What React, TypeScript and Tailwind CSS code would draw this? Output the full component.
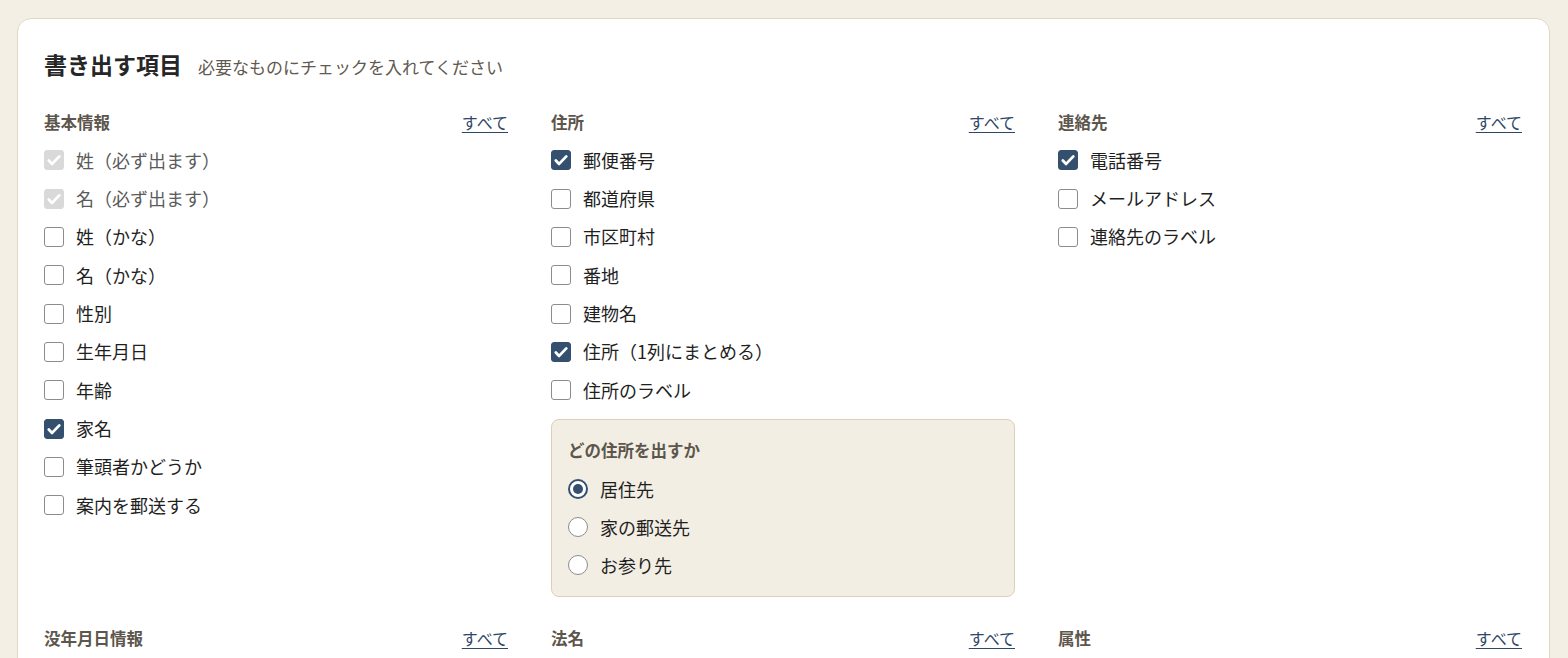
// Export options — which fields to write out.

import { useState } from "react";

type Item = { label: string; checked?: boolean; locked?: boolean };
type Section = { title: string; items: Item[]; addressBox?: boolean };

const sections: Section[] = [
  {
    title: "基本情報",
    items: [
      { label: "姓（必ず出ます）", checked: true, locked: true },
      { label: "名（必ず出ます）", checked: true, locked: true },
      { label: "姓（かな）" },
      { label: "名（かな）" },
      { label: "性別" },
      { label: "生年月日" },
      { label: "年齢" },
      { label: "家名", checked: true },
      { label: "筆頭者かどうか" },
      { label: "案内を郵送する" },
    ],
  },
  {
    title: "住所",
    addressBox: true,
    items: [
      { label: "郵便番号", checked: true },
      { label: "都道府県" },
      { label: "市区町村" },
      { label: "番地" },
      { label: "建物名" },
      { label: "住所（1列にまとめる）", checked: true },
      { label: "住所のラベル" },
    ],
  },
  {
    title: "連絡先",
    items: [{ label: "電話番号", checked: true }, { label: "メールアドレス" }, { label: "連絡先のラベル" }],
  },
  { title: "没年月日情報", items: [] },
  { title: "法名", items: [] },
  { title: "属性", items: [] },
];

const addressKinds = ["居住先", "家の郵送先", "お参り先"];

const font = "font-['Noto_Sans_CJK_JP','Noto_Sans',sans-serif]";

export default function App() {
  return (
    <div className={`min-h-screen bg-[#f4efe5] pl-[17px] pr-[18px] pt-[18px] ${font}`}>
      <div className="rounded-[14px] border border-[#e2d7c3] bg-white pl-[26px] pr-[27px] pt-[29px] pb-10">
        <div className="flex items-baseline gap-4">
          <h2 className="text-[23px] font-bold leading-8 text-[#262626]">書き出す項目</h2>
          <span className="text-[17px] text-[#5f5950]">必要なものにチェックを入れてください</span>
        </div>
        <div className="mt-[30px] grid grid-cols-3 gap-x-[43px] gap-y-[29px]">
          {sections.map((s) => (
            <SectionBlock key={s.title} section={s} />
          ))}
        </div>
      </div>
    </div>
  );
}

function SectionBlock({ section }: { section: Section }) {
  const [checked, setChecked] = useState(section.items.map((i) => !!i.checked));
  return (
    <div>
      <div className="mb-[7px] flex h-6 items-center justify-between">
        <span className="text-[16.5px] font-bold text-[#5d564c]">{section.title}</span>
        <button
          type="button"
          onClick={() => setChecked(section.items.map(() => true))}
          className="text-[16px] text-[#2e4766] underline underline-offset-[3px]"
        >
          すべて
        </button>
      </div>
      {section.items.map((item, i) => (
        <label key={item.label} className="flex h-[38.35px] items-center gap-3">
          <Checkbox
            checked={checked[i]}
            locked={item.locked}
            onToggle={() => !item.locked && setChecked((c) => c.map((v, j) => (j === i ? !v : v)))}
          />
          <span className={`text-[18px] ${item.locked ? "text-[#5a5a5a]" : "text-[#1f1f1f]"}`}>{item.label}</span>
        </label>
      ))}
      {section.addressBox && <AddressBox />}
    </div>
  );
}

function Checkbox({ checked, locked, onToggle }: { checked: boolean; locked?: boolean; onToggle: () => void }) {
  const cls = locked
    ? "bg-[#d9d9d9] border-[#d9d9d9]"
    : checked
      ? "bg-[#34506e] border-[#34506e]"
      : "bg-white border-[#8c8c8c]";
  return (
    <span
      role="checkbox"
      aria-checked={checked}
      onClick={onToggle}
      className={`flex h-5 w-5 shrink-0 items-center justify-center rounded-[3px] border ${cls}`}
    >
      {checked && (
        <svg viewBox="0 0 16 16" className="h-4 w-4" fill="none">
          <path d="M2.8 8.6l3.3 3.3L13.3 4.4" stroke="white" strokeWidth="2.8" strokeLinecap="round" strokeLinejoin="round" />
        </svg>
      )}
    </span>
  );
}

function AddressBox() {
  const [kind, setKind] = useState(0);
  return (
    <div className="mt-[10px] rounded-[8px] border border-[#dccfb5] bg-[#f3eee4] px-4 pt-[18px] pb-3">
      <div className="text-[16.5px] font-bold leading-6 text-[#5d564c]">どの住所を出すか</div>
      <div className="mt-2">
        {addressKinds.map((k, i) => (
          <label key={k} className="flex h-[38px] items-center gap-3" onClick={() => setKind(i)}>
            <span
              className={`flex h-5 w-5 shrink-0 items-center justify-center rounded-full bg-white ${
                kind === i ? "border-2 border-[#34506e]" : "border border-[#8c8c8c]"
              }`}
            >
              {kind === i && <span className="h-[10px] w-[10px] rounded-full bg-[#34506e]" />}
            </span>
            <span className="text-[18px] text-[#1f1f1f]">{k}</span>
          </label>
        ))}
      </div>
    </div>
  );
}
